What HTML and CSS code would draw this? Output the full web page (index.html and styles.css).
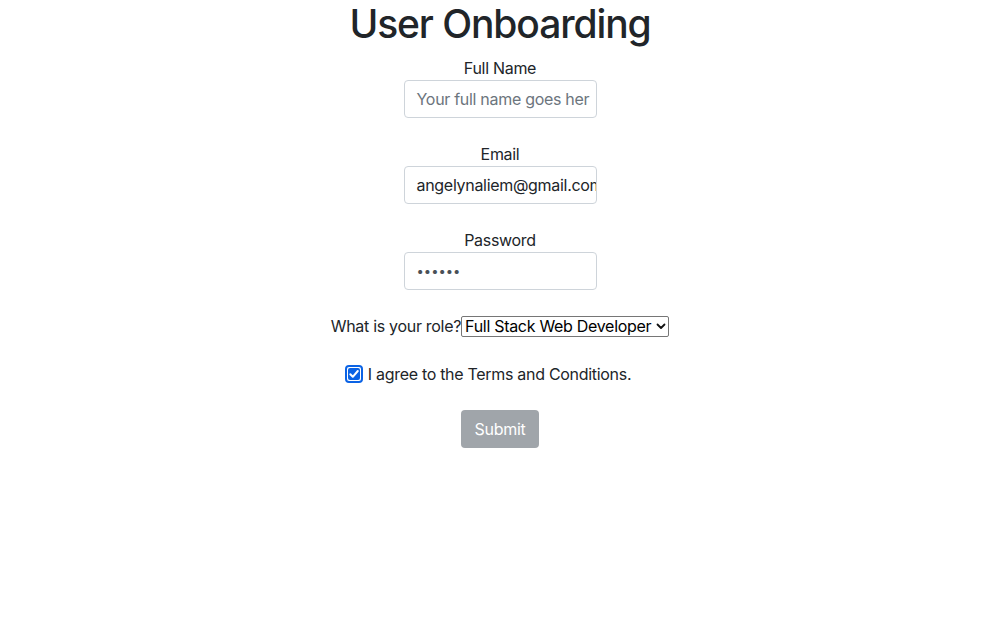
FILE: index.html
```html
<!DOCTYPE html>
<html>
<head>
<meta charset="utf-8">
<link rel="stylesheet" href="styles.css">
</head>
<body>
<div class="app">
  <h1 class="title">User Onboarding</h1>
  <form class="form">
    <div class="group">
      <label class="label">Full Name</label>
      <div class="control placeholder">Your full name goes her</div>
    </div>
    <div class="group">
      <label class="label">Email</label>
      <div class="control">angelynaliem@gmail.com</div>
    </div>
    <div class="group">
      <label class="label">Password</label>
      <div class="control dots">••••••</div>
    </div>
    <div class="role-row">
      <span class="role-label">What is your role?</span><span class="select">Full Stack Web Developer<svg class="chev" width="10" height="7" viewBox="0 0 10 7"><path d="M1.5 1.5 L5 5 L8.5 1.5" fill="none" stroke="#111" stroke-width="1.8" stroke-linecap="round" stroke-linejoin="round"/></svg></span>
    </div>
    <div class="check-row">
      <span class="check"><span class="check-inner"><svg width="12" height="12" viewBox="0 0 12 12"><path d="M2.3 6.3 L4.8 8.8 L9.8 3" fill="none" stroke="#fff" stroke-width="2" stroke-linecap="round" stroke-linejoin="round"/></svg></span></span><span class="check-text">I agree to the Terms and Conditions.</span>
    </div>
    <div class="btn-row">
      <button type="button" class="btn">Submit</button>
    </div>
  </form>
</div>
</body>
</html>
```
FILE: styles.css
```css
* { box-sizing: border-box; }
body {
  margin: 0;
  font-family: "Inter", "Liberation Sans", sans-serif;
  font-size: 16px;
  line-height: 24px;
  color: #212529;
  background: #fff;
}
.app { text-align: center; }
.title {
  margin: 0 0 8px;
  font-size: 39px;
  line-height: 48px;
  font-weight: 500;
  letter-spacing: -1.1px;
}
.form {
  display: flex;
  flex-direction: column;
  align-items: center;
  gap: 24px;
}
.group {
  display: flex;
  flex-direction: column;
  align-items: center;
}
.label { display: block; height: 24px; letter-spacing: -0.3px; }
.control {
  width: 193px;
  height: 38px;
  padding: 6px 12px;
  border: 1px solid #ced4da;
  border-radius: 4px;
  text-align: left;
  white-space: nowrap;
  overflow: hidden;
  text-overflow: clip;
  color: #212529;
  letter-spacing: -0.3px;
}
.placeholder { color: #6c757d; }
.dots { font-size: 13px; letter-spacing: 0; color: #495057; }
.role-row {
  display: flex;
  align-items: center;
  height: 24px;
  letter-spacing: -0.3px;
}
.select {
  display: inline-flex;
  align-items: center;
  height: 21px;
  padding: 0 2px 0 3px;
  border: 1px solid #767676;
  border-radius: 2px;
  color: #000;
  font-size: 16px;
  line-height: 19px;
}
.chev { margin-left: 5px; }
.check-row {
  display: flex;
  align-items: center;
  height: 24px;
  padding-right: 24px;
  letter-spacing: -0.3px;
}
.check {
  width: 18px;
  height: 18px;
  border: 2px solid #0b63e5;
  border-radius: 4px;
  padding: 1px;
  margin-right: 5px;
  display: flex;
}
.check-inner {
  flex: 1;
  background: #0b63e5;
  border-radius: 2px;
  display: flex;
  align-items: center;
  justify-content: center;
}
.btn {
  width: 78px;
  height: 38px;
  border: 0;
  border-radius: 4px;
  background: #a0a5aa;
  color: #fff;
  font-family: inherit;
  font-size: 16px;
  letter-spacing: -0.3px;
}
```
